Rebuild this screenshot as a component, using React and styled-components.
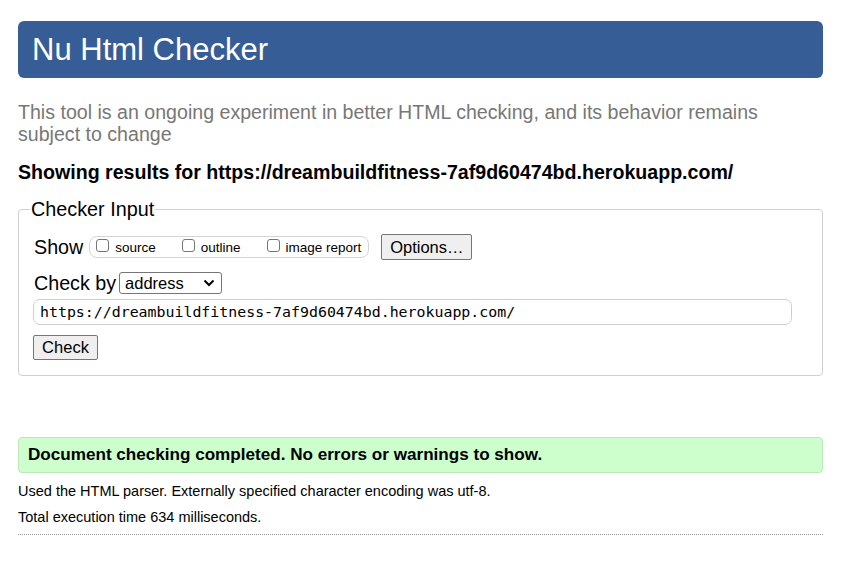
import React from "react";
import styled, { createGlobalStyle } from "styled-components";

const Global = createGlobalStyle`
  html, body { margin: 0; padding: 0; background: #fff; }
  body { font-family: "Liberation Sans", Arial, sans-serif; color: #000; }
`;

const Page = styled.div`
  width: 805px;
  padding: 21px 0 0 18px;
`;

const Header = styled.h1`
  margin: 0;
  height: 57px;
  box-sizing: border-box;
  background: #375d96;
  border-radius: 6px;
  color: #fff;
  font-weight: normal;
  font-size: 31px;
  line-height: 57px;
  padding-left: 14px;
`;

const Intro = styled.p`
  margin: 23px 0 0;
  color: #777;
  font-size: 19.6px;
  line-height: 22px;
`;

const Results = styled.h2`
  margin: 16px 0 0;
  font-size: 19.6px;
  line-height: 22px;
  font-weight: bold;
`;

const Fieldset = styled.fieldset`
  margin: 15px 0 0;
  padding: 0 15px 15px 15px;
  border: 1px solid #d0d0d0;
  border-radius: 4px;
`;

const Legend = styled.legend`
  font-size: 19.8px;
  padding: 0 1px;
  margin-left: -4px;
  line-height: 22px;
`;

const Row = styled.div`
  display: flex;
  align-items: center;
  margin-top: ${(p) => p.$mt || 0}px;
`;

const Label = styled.span`
  font-size: 19.7px;
  line-height: 22px;
`;

const Pill = styled.div`
  display: flex;
  align-items: center;
  height: 22px;
  box-sizing: border-box;
  border: 1px solid #d4d4d4;
  border-radius: 8px;
  padding: 0 7px 0 6px;
  margin-left: 6px;
  gap: 26px;
`;

const Opt = styled.label`
  display: flex;
  align-items: flex-end;
  font-size: 13.5px;
  line-height: 15px;
  gap: 6px;
`;

const Box = styled.span`
  width: 13px;
  height: 13px;
  box-sizing: border-box;
  border: 1px solid #767676;
  border-radius: 3px;
  margin-bottom: 3px;
  background: #fff;
`;

const Button = styled.button`
  font-family: "Liberation Sans", Arial, sans-serif;
  font-size: 16.5px;
  height: ${(p) => p.$h || 26}px;
  width: ${(p) => p.$w}px;
  padding: 0;
  background: #efefef;
  border: 1px solid #767676;
  border-radius: 2px;
  color: #000;
  margin-left: ${(p) => p.$ml || 0}px;
`;

const Select = styled.div`
  display: flex;
  align-items: center;
  justify-content: space-between;
  margin-left: 3px;
  width: 103px;
  height: 22px;
  box-sizing: border-box;
  border: 1px solid #767676;
  border-radius: 3px;
  padding: 0 6px 0 5px;
  font-size: 16.5px;
`;

const UrlInput = styled.div`
  width: 759px;
  height: 26px;
  box-sizing: border-box;
  border: 1px solid #cfcfcf;
  border-radius: 7px;
  font-family: "DejaVu Sans Mono", monospace;
  font-size: 14.9px;
  line-height: 24px;
  padding-left: 6px;
  margin-top: 5px;
  margin-left: -1px;
`;

const Success = styled.div`
  margin-top: 61px;
  height: 36px;
  box-sizing: border-box;
  background: #ccffcc;
  border: 1px solid #bde6bd;
  border-radius: 4px;
  font-weight: bold;
  font-size: 17.1px;
  line-height: 34px;
  padding-left: 9px;
`;

const Note = styled.p`
  margin: ${(p) => p.$mt}px 0 0;
  font-size: 14.5px;
  line-height: 18px;
`;

const Rule = styled.hr`
  margin: 8px 0 0;
  border: 0;
  border-top: 1px dotted #999;
`;

const Chevron = () => (
  <svg width="12" height="8" viewBox="0 0 12 8">
    <path d="M1.5 1.5 L6 6 L10.5 1.5" fill="none" stroke="#000" strokeWidth="2" />
  </svg>
);

export default function App() {
  return (
    <>
      <Global />
      <Page>
        <Header>Nu Html Checker</Header>
        <Intro>
          This tool is an ongoing experiment in better HTML checking, and its behavior remains subject to change
        </Intro>
        <Results>Showing results for https://dreambuildfitness-7af9d60474bd.herokuapp.com/</Results>
        <Fieldset>
          <Legend>Checker Input</Legend>
          <Row $mt={14}>
            <Label>Show</Label>
            <Pill>
              <Opt><Box />source</Opt>
              <Opt><Box />outline</Opt>
              <Opt><Box />image report</Opt>
            </Pill>
            <Button $ml={12} $w={91}>Options…</Button>
          </Row>
          <Row $mt={12}>
            <Label>Check by</Label>
            <Select>
              <span>address</span>
              <Chevron />
            </Select>
          </Row>
          <UrlInput>https://dreambuildfitness-7af9d60474bd.herokuapp.com/</UrlInput>
          <Row $mt={10}>
            <Button $h={25} $w={65} $ml={-1}>Check</Button>
          </Row>
        </Fieldset>
        <Success>Document checking completed. No errors or warnings to show.</Success>
        <Note $mt={9}>Used the HTML parser. Externally specified character encoding was utf-8.</Note>
        <Note $mt={8}>Total execution time 634 milliseconds.</Note>
        <Rule />
      </Page>
    </>
  );
}
